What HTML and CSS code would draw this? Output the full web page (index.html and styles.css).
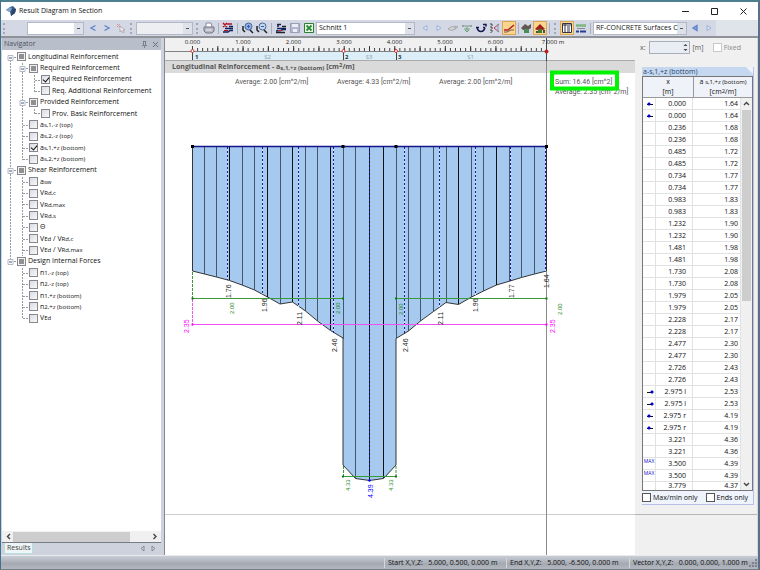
FILE: index.html
```html
<!DOCTYPE html>
<html lang="en">
<head>
<meta charset="utf-8">
<title>Result Diagram in Section</title>
<link rel="stylesheet" href="styles.css">
</head>
<body>
<div class="window">
  <header class="titlebar">
    <svg class="app-icon" width="10" height="10" viewBox="0 0 10 10"><path d="M0 4 4 1 7 0 10 3 9 7 5 10 4 6z" fill="#3c5f8c"/><path d="M0 4 4 1 6 3 4 6z" fill="#7fa3c8"/><path d="M6 3 10 3 9 7 5 10z" fill="#29466e"/></svg>
    <h1>Result Diagram in Section</h1>
    <button class="win-btn" aria-label="Minimize"><svg width="9" height="9"><path d="M1 4.500h7" stroke="#222"/></svg></button>
    <button class="win-btn" aria-label="Maximize"><svg width="9" height="9"><path d="M1.500 1.500h6v6h-6z" fill="none" stroke="#222"/></svg></button>
    <button class="win-btn" aria-label="Close"><svg width="9" height="9"><path d="M1.500 1.500l6 6m0-6l-6 6" stroke="#222"/></svg></button>
  </header>

  <div class="toolbar" role="toolbar">
    <span class="grip first"></span>
    <select class="combo" aria-label="Section"><option></option></select>
    <button class="tool" aria-label="Previous section"><svg viewBox="0 0 14 14"><path d="M9.500 4.500 5 7l4.500 2.500" class="nav-on"/></svg></button>
    <button class="tool" aria-label="Next section"><svg viewBox="0 0 14 14"><path d="M4.500 4.500 9 7 4.500 9.500" class="nav-on"/></svg></button>
    <button class="tool" aria-label="Pick section"><svg viewBox="0 0 14 14"><path d="M3 3l3 3M3 6l3-3" stroke="#c99" /><path d="M6 5v6l1.500-1.500L9 12l1-.5L9 9h2z" fill="#eee" stroke="#a89a9a" stroke-width=".7"/></svg></button>
    <span class="grip"></span>
    <select class="combo off" aria-label="Load case" disabled><option></option></select>
    <span class="grip"></span>
    <button class="tool" aria-label="Print"><svg viewBox="0 0 14 14"><path d="M4 6V2h5l1 4" fill="#fff" stroke="#889"/><path d="M2 6h10v4l-2 2H4L2 10z" fill="#b4b8c4" stroke="#778"/><path d="M4 9h6" stroke="#eee"/></svg></button>
    <span class="sep"></span>
    <button class="tool" aria-label="Diagram settings"><svg viewBox="0 0 14 14"><path d="M2 2l4 4m0-4L2 6M6 3h5" stroke="#b41020" stroke-width="1.500"/><path d="M4 7.500h8M8 5.500h4M2 11h5l2-1.500h3" stroke="#12205e" stroke-width="1.500" fill="none"/><path d="M3 9.500h4" stroke="#b41020"/></svg></button>
    <span class="sep wide"></span>
    <button class="tool" aria-label="Zoom in"><svg viewBox="0 0 14 14"><circle cx="7.500" cy="5.500" r="3.500" fill="#8fb0e4" stroke="#4a6797"/><path d="M6 5.500h3M7.500 4v3" stroke="#3558a0"/><path d="M9 9l3 3M2 5v4l2 2" stroke="#222" stroke-width="1.500" fill="none"/></svg></button>
    <button class="tool" aria-label="Zoom out"><svg viewBox="0 0 14 14"><circle cx="7.500" cy="5.500" r="3.500" fill="#c3d6f2" stroke="#4a6797"/><path d="M6 5.500h3" stroke="#3558a0"/><path d="M9 9l3 3M2 5v4l2 2" stroke="#222" stroke-width="1.500" fill="none"/></svg></button>
    <span class="sep"></span>
    <button class="tool" aria-label="Show values"><svg viewBox="0 0 14 14"><path d="M3 3.500h4M8 5.500h4M2 11.500h9" stroke="#223" stroke-width="1.500"/><path d="M3 7.500h9M2 10l5-.5L9 8.500h3M4 3v3" stroke="#12205e" stroke-width="1.500" fill="none"/><path d="M4 9.500h4" stroke="#b33"/></svg></button>
    <button class="tool" aria-label="Save"><svg viewBox="0 0 14 14"><path d="M2.500 2.500h9v9h-9z" fill="#b3b8d0" stroke="#9a9fb8"/><path d="M4 3h6v3H4zM5 8h4v3H5z" fill="#eceef4"/></svg></button>
    <button class="tool" aria-label="Export to Excel"><svg viewBox="0 0 14 14"><path d="M2.500 2.500h9v9h-9z" fill="#eaf6e6" stroke="#2f7d32"/><path d="M4.500 4.500l5 5m0-5l-5 5" stroke="#2d8a34" stroke-width="1.800"/></svg></button>
    <select class="combo section" aria-label="Section name"><option>Schnitt 1</option></select>
    <button class="tool" aria-label="Previous"><svg viewBox="0 0 14 14"><path d="M9 4.500 5 7l4 2.500z" class="nav-off"/></svg></button>
    <button class="tool" aria-label="Next"><svg viewBox="0 0 14 14"><path d="M5 4.500 9 7 5 9.500z" class="nav-off"/></svg></button>
    <button class="tool" aria-label="Hide"><svg viewBox="0 0 14 14"><path d="M2 8q4-4 8-1-4 4-8 1zM8 5l4 1-4 3" fill="#d4d6da" stroke="#aaa"/></svg></button>
    <button class="tool" aria-label="Mean line"><svg viewBox="0 0 14 14"><path d="M2 5h10M3 4v2M11 4v2" stroke="#789a80"/><path d="M7 6v5M5 9l2 2 2-2M4 8h6" stroke="#6fa67c" fill="none"/></svg></button>
    <button class="tool" aria-label="Flip diagram"><svg viewBox="0 0 14 14"><path d="M2 6.500h3M9 6.500h2M3 6.500q1 4 4 4t4-4M9 3.500h3v2" stroke="#151a50" stroke-width="1.500" fill="none"/></svg></button>
    <button class="tool" aria-label="Extremes"><svg viewBox="0 0 14 14"><path d="M3 2v10M3 4h3M3 7h3M3 10h3" stroke="#444" stroke-dasharray="2 1"/><path d="M6 7l5-4M6 7l5 4" stroke="#c33a5a"/><path d="M10 3v8" stroke="#79a"/></svg></button>
    <button class="tool active" aria-label="Smooth result"><svg viewBox="0 0 14 14"><path d="M2 9h4l6-5" stroke="#b8202a" stroke-width="1.500" fill="none"/><path d="M2 11h3l4-2h3" stroke="#6a5a60" fill="none"/></svg></button>
    <span class="sep narrow"></span>
    <button class="tool" aria-label="Result values"><svg viewBox="0 0 14 14"><path d="M2 7l4-4 3 2 3-2v4l-3 2H4z" fill="#655"/><path d="M5 8h5v4H5z" fill="#4a8d5a"/></svg></button>
    <button class="tool active" aria-label="Result colors"><svg viewBox="0 0 14 14"><path d="M2 8l5-5 5 5-2 1H4z" fill="#a02020"/><path d="M5 8h4v4H5z" fill="#4d7a28"/><path d="M3 10h2v2H3zM10 9h2v3h-2z" fill="#356"/></svg></button>
    <span class="sep"></span>
    <span class="grip"></span>
    <button class="tool active" aria-label="Table panel"><svg viewBox="0 0 14 14"><path d="M2.500 2.500h9v9h-9z" fill="#fff" stroke="#334"/><path d="M2.500 4h9M5 3v8M7 6h3M7 8h3M7 10h3" stroke="#334"/></svg></button>
    <button class="tool" aria-label="Color panel"><svg viewBox="0 0 14 14"><path d="M2 4.500h10" stroke="#7db77f" stroke-width="2.500"/><path d="M3 7.500h8" stroke="#888"/><path d="M2 10.500h3m1 0h6" stroke="#2a3f93" stroke-width="2"/></svg></button>
    <span class="sep"></span>
    <select class="combo module" aria-label="Module"><option>RF-CONCRETE Surfaces C</option></select>
    <button class="tool" aria-label="Previous case"><svg viewBox="0 0 14 14"><path d="M9 4.500 5 7l4 2.500z" class="nav-on fill"/></svg></button>
    <button class="tool" aria-label="Next case"><svg viewBox="0 0 14 14"><path d="M5 4.500 9 7 5 9.500z" class="nav-off"/></svg></button>
  </div>

  <main class="work">
    <aside class="navigator">
      <div class="nav-head"><h2>Navigator</h2>
        <svg width="7" height="7" viewBox="0 0 7 7"><path d="M2 .5h3M2.500 0v4M4.500 0v4M1 4.500h5M3.500 5v2" stroke="#6b7180" stroke-width=".8"/></svg>
        <svg width="7" height="7" viewBox="0 0 7 7"><path d="M1 1l5 5m0-5L1 6" stroke="#6b7180"/></svg>
      </div>
      <div class="tree-wrap">
        <ul class="tree">
          <li class="l0"><label><input type="checkbox" class="part">Longitudinal Reinforcement</label></li>
          <li class="l1"><label><input type="checkbox" class="part">Required Reinforcement</label></li>
          <li class="l2"><label><input type="checkbox" checked>Required Reinforcement</label></li>
          <li class="l2"><label><input type="checkbox">Req. Additional Reinforcement</label></li>
          <li class="l1"><label><input type="checkbox" class="part">Provided Reinforcement</label></li>
          <li class="l2"><label><input type="checkbox">Prov. Basic Reinforcement</label></li>
          <li class="l1"><label><input type="checkbox">a<sub>s,1,-z (top)</sub></label></li>
          <li class="l1"><label><input type="checkbox">a<sub>s,2,-z (top)</sub></label></li>
          <li class="l1"><label><input type="checkbox" checked>a<sub>s,1,+z (bottom)</sub></label></li>
          <li class="l1"><label><input type="checkbox">a<sub>s,2,+z (bottom)</sub></label></li>
          <li class="l0"><label><input type="checkbox" class="part">Shear Reinforcement</label></li>
          <li class="l1"><label><input type="checkbox">a<sub>sw</sub></label></li>
          <li class="l1"><label><input type="checkbox">V<sub>Rd,c</sub></label></li>
          <li class="l1"><label><input type="checkbox">V<sub>Rd,max</sub></label></li>
          <li class="l1"><label><input type="checkbox">V<sub>Rd,s</sub></label></li>
          <li class="l1"><label><input type="checkbox">Θ</label></li>
          <li class="l1"><label><input type="checkbox">V<sub>Ed</sub> / V<sub>Rd,c</sub></label></li>
          <li class="l1"><label><input type="checkbox">V<sub>Ed</sub> / V<sub>Rd,max</sub></label></li>
          <li class="l0"><label><input type="checkbox" class="part">Design Internal Forces</label></li>
          <li class="l1"><label><input type="checkbox">n<sub>1,-z (top)</sub></label></li>
          <li class="l1"><label><input type="checkbox">n<sub>2,-z (top)</sub></label></li>
          <li class="l1"><label><input type="checkbox">n<sub>1,+z (bottom)</sub></label></li>
          <li class="l1"><label><input type="checkbox">n<sub>2,+z (bottom)</sub></label></li>
          <li class="l1"><label><input type="checkbox">V<sub>Ed</sub></label></li>
        </ul>
        <svg class="branches" width="45" height="273" viewBox="0 0 45 273">
          <g fill="none" stroke="#9a9a9a" stroke-dasharray="2 1">
            <path d="M8.500 6v205M20.500 12v97M20.500 126v79M20.500 217v50M32.500 24v17M32.500 63v-5"/>
            <path d="M9 6.500h5M9 119.500h5M9 210.500h5M21 17.500h5M21 51.500h5M33 29.500h5M33 40.500h5M33 62.500h5M21 74.500h5M21 85.500h5M21 97.500h5M21 108.500h5M21 131.500h5M21 142.500h5M21 153.500h5M21 165.500h5M21 176.500h5M21 188.500h5M21 199.500h5M21 222.500h5M21 233.500h5M21 245.500h5M21 256.500h5M21 267.500h5"/>
          </g>
          <g fill="#fff" stroke="#b5b9c4"><path d="M6 4.500h5v5H6zM6 117.500h5v5H6zM6 208.500h5v5H6zM18 15.500h5v5h-5zM18 49.500h5v5h-5z"/></g>
          <path d="M7 7h3M7 120h3M7 211h3M19 18h3M19 52h3" stroke="#3c5f9c"/>
        </svg>
      </div>
      <div class="hscroll"><svg width="9" height="9"><path d="M6 2 3.500 4.500 6 7" class="arrow"/></svg><span class="hthumb"></span><svg width="9" height="9"><path d="M3.500 2 6 4.500 3.500 7" class="arrow"/></svg></div>
      <div class="tabs"><button class="tab">Results</button>
        <svg width="7" height="7"><path d="M5 1 2 3.500 5 6z" class="tab-arrow"/></svg>
        <svg width="7" height="7"><path d="M2 1l3 2.500L2 6z" class="tab-arrow"/></svg>
      </div>
    </aside>

    <section class="chart">
      <svg class="ruler" viewBox="165 38 470 23">
        <rect x="192" y="51" width="354.500" height="9.500" fill="#dceef8"/>
        <path d="M165 51.500h381.500" stroke="#666" stroke-width=".8"/><path d="M165 60.500h470" stroke="#aaa"/>
        <path d="M192 49.500h355" stroke="#444" stroke-width="3" stroke-dasharray="1 4.057"/>
        <path d="M192 48.500h355" stroke="#333" stroke-width="5" stroke-dasharray="1 24.286"/>
        <path d="M192.500 46v14M343.500 51v9M396.500 51v9M546.500 38v23" stroke="#444"/>
        <g class="tick">
          <text x="192.500" y="44">0.000</text><text x="243" y="44">1.000</text><text x="293.500" y="44">2.000</text><text x="344" y="44">3.000</text><text x="394.500" y="44">4.000</text><text x="445" y="44">5.000</text><text x="495.500" y="44">6.000</text><text x="553" y="44">7.000 m</text>
        </g>
        <g class="node"><text x="195" y="58.500">1</text><text x="345" y="58.500">2</text><text x="398" y="58.500">3</text></g>
        <g class="surf"><text x="267.500" y="58.500">S2</text><text x="369" y="58.500">S3</text><text x="470.500" y="58.500">S1</text></g>
        <g fill="#fff" stroke="#d33"><circle cx="192.500" cy="51" r="1.500"/><circle cx="343.500" cy="51" r="1.500"/><circle cx="396" cy="51" r="1.500"/></g><circle cx="546.500" cy="51.500" r="2" fill="#b22"/>
      </svg>
      <h2 class="chart-title">Longitudinal Reinforcement - a<sub>s,1,+z (bottom)</sub> [cm<sup>2</sup>/m]</h2>
      <svg class="plot" viewBox="165 73 470 482">
        <path d="M165 514.500h470" stroke="#ccc"/>
        <path d="M546.500 61v494" stroke="#8c8c8c"/>
        <path fill="#a6c9ef" stroke="#222" stroke-width=".9" d="M192.500 146.500V271l12 3 12 3 13 3.500 12.500 4.500 12.500 5 13 7 12.500 7 12.500-2 13 9 12 10 13 9.500 12.500 7.500V465l12.500 13.500 14 2 14-2L396 465V338.500l12.500-7.500 12-10 13-9.500 12.500-9 12.500 2 13-7.500 12-6 13-6 13.500-4 11.500-3.500 13-3.500 12-3V146.500z"/>
        <path stroke="#39485a" stroke-width=".9" d="M204.500 147v127M216.500 147v130M242.500 147v138M254.500 147v143M280.500 147v157M305.500 147v164M317.500 147v174M343.500 147v192M355.500 147v331M396.500 147v191M408.500 147v184M420.500 147v174M433.500 147v164M446.500 147v155M471.500 147v150M483.500 147v144M509.500 147v134M521.500 147v130M534.500 147v127"/>
        <path stroke="#111" d="M229.500 147v133M267.500 147v150M292.500 147v155M330.500 147v183M369.500 147v333M383.500 147v331M458.500 147v157M496.500 147v138"/>
        <path stroke="#cfe0ff" d="M227.500 147v133M262.500 147v147M298.500 147v160M333.500 147v186M404.500 147v186M439.500 147v160M475.500 147v148M510.500 147v134M545.500 147v124"/>
        <path stroke="#1a1aa0" stroke-dasharray="2 2" d="M227.500 147v133M262.500 147v147M298.500 147v160M333.500 147v186M369.500 147v333M404.500 147v186M439.500 147v160M475.500 147v148M510.500 147v134M545.500 147v124"/>
        <path d="M192 146.500h355" stroke="#15158c" stroke-width="1.500"/>
        <path d="M191 145h3v3h-3zM341.500 145h3v3h-3zM394.500 145h3v3h-3zM545 145h3v3h-3z"/>
        <g fill="none" stroke="#f050f0"><path d="M192.500 324.500h354"/><path d="M192.500 299v26" stroke-dasharray="3 1"/></g>
        <path d="M191.500 323.500h2v2h-2zM545.500 323.500h2v2h-2z" fill="#f0f"/>
        <g fill="none" stroke="#3a9a3a"><path d="M192.500 298.500H343M396 298.500h150.500M343 476.500h53"/><path d="M192.500 272v26M343.500 466v10M396 466v10" stroke-dasharray="3 1"/></g>
        <path fill="#0a7a0a" d="M191.500 297.500h2v2h-2zM342 297.500h2v2h-2zM395 297.500h2v2h-2zM545.500 297.500h2v2h-2zM342 475.500h2v2h-2zM395 475.500h2v2h-2z"/>
        <circle cx="369.500" cy="480.500" r="1.200" fill="#00f"/>
        <g class="val">
          <text transform="translate(231 298) rotate(-90)">1.76</text><text transform="translate(266.500 312) rotate(-90)">1.96</text><text transform="translate(301.500 325) rotate(-90)">2.11</text><text transform="translate(336.500 352) rotate(-90)">2.46</text>
          <text transform="translate(407.500 352) rotate(-90)">2.46</text><text transform="translate(443 325) rotate(-90)">2.11</text><text transform="translate(478 312) rotate(-90)">1.96</text><text transform="translate(513.500 298) rotate(-90)">1.77</text><text transform="translate(549 288) rotate(-90)">1.64</text>
        </g>
        <g class="mean">
          <text transform="translate(234 314) rotate(-90)">2.00</text><text transform="translate(340 314) rotate(-90)">2.00</text><text transform="translate(403 315) rotate(-90)">2.00</text><text transform="translate(561.500 315) rotate(-90)">2.00</text>
          <text transform="translate(350 491) rotate(-90)">4.33</text><text transform="translate(393 491) rotate(-90)">4.33</text>
        </g>
        <g class="total"><text transform="translate(189 333) rotate(-90)">2.35</text><text transform="translate(555 333) rotate(-90)">2.35</text></g>
        <text class="peak" transform="translate(372.500 498) rotate(-90)">4.39</text>
        <g class="note"><text x="235" y="84">Average: 2.00 [cm^2/m]</text><text x="337" y="84">Average: 4.33 [cm^2/m]</text><text x="439" y="84">Average: 2.00 [cm^2/m]</text><text x="555" y="94">Average: 2.35 [cm^2/m]</text></g>
        <rect x="552" y="72.500" width="65" height="16" fill="#fff" stroke="#00f400" stroke-width="4"/>
        <text class="note" x="555" y="84">Sum: 16.46 [cm^2]</text>
      </svg>
    </section>

    <aside class="panel">
      <form class="locate">
        <label for="posx">x:</label>
        <span class="spin"><input id="posx" type="text"><svg width="7" height="11"><path d="M0 0h7v11H0z" fill="#e8ebf0"/><path d="M3.500 2 5.500 4h-4zM3.500 9l2-2h-4z" fill="#445"/></svg></span>
        <span>[m]</span>
        <label class="fixed"><input type="checkbox" disabled>Fixed</label>
      </form>
      <div class="card">
        <h2 class="card-title">a-s,1,+z (bottom)</h2>
        <div class="grid-wrap">
          <table>
            <colgroup><col class="c-mark"><col class="c-x"><col class="c-val"><col class="c-bar"></colgroup>
            <thead><tr><th colspan="2">x<br>[m]</th><th colspan="2">a <sub>s,1,+z (bottom)</sub><br>[cm<sup>2</sup>/m]</th></tr></thead>
            <tbody>
              <tr><td class="left"></td><td>0.000</td><td>1.64</td><td class="bar" rowspan="33"><svg class="vscroll" viewBox="0 0 11 392"><path d="M0 0h11v392H0z" fill="#f0f0f0"/><path d="M1 12h9v191H1z" fill="#cdcdcd"/><path d="M3 7l2.500-2.500L8 7M3 385l2.500 2.500L8 385" class="arrow"/></svg></td></tr>
              <tr><td class="left"></td><td>0.000</td><td>1.64</td></tr>
              <tr><td></td><td>0.236</td><td>1.68</td></tr>
              <tr><td></td><td>0.236</td><td>1.68</td></tr>
              <tr><td></td><td>0.485</td><td>1.72</td></tr>
              <tr><td></td><td>0.485</td><td>1.72</td></tr>
              <tr><td></td><td>0.734</td><td>1.77</td></tr>
              <tr><td></td><td>0.734</td><td>1.77</td></tr>
              <tr><td></td><td>0.983</td><td>1.83</td></tr>
              <tr><td></td><td>0.983</td><td>1.83</td></tr>
              <tr><td></td><td>1.232</td><td>1.90</td></tr>
              <tr><td></td><td>1.232</td><td>1.90</td></tr>
              <tr><td></td><td>1.481</td><td>1.98</td></tr>
              <tr><td></td><td>1.481</td><td>1.98</td></tr>
              <tr><td></td><td>1.730</td><td>2.08</td></tr>
              <tr><td></td><td>1.730</td><td>2.08</td></tr>
              <tr><td></td><td>1.979</td><td>2.05</td></tr>
              <tr><td></td><td>1.979</td><td>2.05</td></tr>
              <tr><td></td><td>2.228</td><td>2.17</td></tr>
              <tr><td></td><td>2.228</td><td>2.17</td></tr>
              <tr><td></td><td>2.477</td><td>2.30</td></tr>
              <tr><td></td><td>2.477</td><td>2.30</td></tr>
              <tr><td></td><td>2.726</td><td>2.43</td></tr>
              <tr><td></td><td>2.726</td><td>2.43</td></tr>
              <tr><td class="right"></td><td>2.975 l</td><td>2.53</td></tr>
              <tr><td class="right"></td><td>2.975 l</td><td>2.53</td></tr>
              <tr><td class="left"></td><td>2.975 r</td><td>4.19</td></tr>
              <tr><td class="left"></td><td>2.975 r</td><td>4.19</td></tr>
              <tr><td></td><td>3.221</td><td>4.36</td></tr>
              <tr><td></td><td>3.221</td><td>4.36</td></tr>
              <tr><td class="max">MAX</td><td>3.500</td><td>4.39</td></tr>
              <tr><td class="max">MAX</td><td>3.500</td><td>4.39</td></tr>
              <tr class="last"><td></td><td>3.779</td><td>4.37</td></tr>
            </tbody>
          </table>
        </div>
        <div class="filters"><label><input type="checkbox">Max/min only</label><label><input type="checkbox">Ends only</label></div>
      </div>
      <div class="panel-rest"></div>
    </aside>
  </main>

  <footer class="status">
    <span class="start">Start X,Y,Z:&nbsp;&nbsp; 5.000, 0.500, 0.000 m</span>
    <span class="end">End X,Y,Z:&nbsp;&nbsp; 5.000, -6.500, 0.000 m</span>
    <span class="vector">Vector X,Y,Z:&nbsp;&nbsp; 0.000, 0.000, 1.000 m</span>
    <svg width="10" height="11" viewBox="0 0 10 11"><path d="M7 2h2v2H7zM4 5h2v2H4zM7 5h2v2H7zM1 8h2v2H1zM4 8h2v2H4zM7 8h2v2H7z" fill="#7d838d"/></svg>
  </footer>
</div>
</body>
</html>
```
FILE: styles.css
```css
* { box-sizing: border-box; }

body {
  margin: 0;
  font: 7px/10px "Open Sans", "Liberation Sans", sans-serif;
  color: #111;
}

h1, h2, ul { margin: 0; padding: 0; font: inherit; }
button, input, select { font: inherit; color: inherit; margin: 0; padding: 0; }
button { border: 0; background: none; }
svg { display: block; flex: none; }
label { white-space: nowrap; }
sub, sup { font-size: 6px; line-height: 1px; }
sub { vertical-align: -1px; }
sup { vertical-align: 2px; }

.window {
  height: 100vh;
  display: flex;
  flex-direction: column;
  border-style: solid;
  border-width: 2px 2px 1px 1px;
  border-color: #4d7f90 #5b6f8a #777d86 #41718c;
  background: #f0f0f0;
}

/* Title bar */
.titlebar { flex: none; height: 18px; display: flex; align-items: center; background: #fff; }
.app-icon { margin: 0 3px 0 5px; }
.titlebar h1 { flex: 1; color: #111; }
.win-btn { width: 29px; height: 18px; display: flex; align-items: center; justify-content: center; }

/* Toolbar */
.toolbar {
  flex: none;
  height: 18px;
  display: flex;
  align-items: center;
  background: linear-gradient(90deg, #d3d8e4 715px, #dfe3ea 715px);
  border-bottom: 2px solid #8f9299;
}
.grip { width: 5px; height: 11px; margin: 0 1px 0 2px; border-left: 2px dotted #a3a8b6; flex: none; }
.grip.first { margin-right: 19px; }
.sep { width: 5px; height: 11px; flex: none; background: linear-gradient(90deg, transparent 2px, #a9aebb 2px 3px, transparent 3px); }
.sep.wide { width: 6px; }
.sep.narrow { width: 3px; }
.tool { width: 14px; height: 14px; flex: none; }
.tool svg { width: 14px; height: 14px; fill: none; }
.tool.active { background: #fbd58c; box-shadow: inset 0 0 0 1px #d9a757; }
.nav-on { fill: none; stroke: #5c82cc; stroke-width: 1.3; }
.nav-on.fill { fill: #8ba9e0; }
.nav-off { fill: #dbe6f6; stroke: #9db2d8; }
.combo {
  appearance: none;
  width: 57px;
  height: 13px;
  flex: none;
  padding: 0 2px;
  border: 1px solid #b4b8c4;
  border-radius: 0;
  background-color: #fff;
  background-image: linear-gradient(#555, #555), linear-gradient(90deg, transparent calc(100% - 9px), #dde1ea 0);
  background-size: 3px 1px, 100% 100%;
  background-position: right 3px center, 0 0;
  background-repeat: no-repeat;
  margin-right: 2px;
}
.combo.off { background-color: #eceef2; margin-right: 1px; opacity: 1; }
.combo.section { width: 99px; margin-right: 3px; }
.combo.module { width: 94px; margin-right: 1px; }

/* Work area */
.work { flex: 1; min-height: 0; display: flex; }

/* Navigator */
.navigator {
  flex: none;
  width: 164px;
  display: flex;
  flex-direction: column;
  background: #cdd2dc;
  border-right: 1px solid #85888f;
  padding: 0 3px 0 1px;
}
.nav-head { height: 12px; display: flex; align-items: center; gap: 4px; background: #b9bfca; padding: 0 2px; color: #4d525c; }
.nav-head h2 { flex: 1; }
.tree-wrap { flex: 1; min-height: 0; position: relative; background: #fff; padding-top: 1px; }
.tree { list-style: none; height: 273px; display: grid; grid-template-rows: repeat(24, 1fr); }
.tree li { display: flex; align-items: center; min-height: 0; }
.tree label, .filters label, .fixed { display: flex; align-items: baseline; white-space: pre; }
.l0 { padding-left: 15px; }
.l1 { padding-left: 27px; }
.l2 { padding-left: 39px; }
.branches { position: absolute; left: 0; top: 1px; }

input[type="checkbox"] {
  appearance: none;
  width: 9px;
  height: 9px;
  margin-right: 2px;
  flex: none;
  align-self: center;
  border: 1px solid #85888e;
  background: linear-gradient(135deg, #d9dce2, #f8f8f8);
}
input.part[type="checkbox"] { background: linear-gradient(#909090, #909090) center / 5px 5px no-repeat, #f3f3f3; }
.tree input:checked { position: relative; }
.tree input:checked::after {
  content: "";
  position: absolute;
  left: 2px;
  top: 0;
  width: 3px;
  height: 5px;
  border: solid #111;
  border-width: 0 1px 1px 0;
  transform: rotate(40deg);
}

.hscroll { height: 11px; display: flex; align-items: center; background: #f0f0f0; padding: 0 2px; }
.hthumb { width: 117px; height: 10px; background: #cdcdcd; margin-right: auto; }
.arrow { fill: none; stroke: #444; stroke-width: 1.4; }
.tabs { height: 13px; display: flex; gap: 4px; align-items: center; border-top: 1px solid #777b84; padding: 0 4px 1px 2px; }
.tab { height: 11px; padding: 0 2px; margin-right: auto; background: #edf5f6; border: 1px solid #b8dede; border-top: 0; color: #444; }
.tab-arrow { fill: none; stroke: #868b98; }

/* Chart */
.chart { flex: 1; min-width: 0; display: flex; flex-direction: column; background: #fff; }
.ruler { width: 100%; background: #f0f0f0; }
.chart-title { flex: none; height: 12px; padding-left: 7px; line-height: 12px; font-weight: 700; color: #555; background: #dadada; white-space: pre; }
.plot { width: 100%; overflow: visible; }
.tick { font-size: 6px; fill: #222; text-anchor: middle; }
.node { font-size: 6px; font-weight: 700; fill: #234; }
.surf { font-size: 6px; fill: #8a9ba8; text-anchor: middle; }
.val, .peak, .mean, .total { font-family: "Liberation Sans", sans-serif; }
.val { font-size: 7px; fill: #222; }
.mean { font-size: 6px; fill: #1f8a1f; }
.total { font-size: 7px; fill: #f0f; }
.peak { font-size: 7px; fill: #00f; }
.note { font-family: Roboto, sans-serif; font-size: 7px; fill: #555; }

/* Result panel */
.panel { flex: none; width: 123px; display: flex; flex-direction: column; background: #f0f0f0; border-right: 1px solid #d6d8dc; }
.locate { height: 23px; display: flex; align-items: center; gap: 3px; padding: 0 0 4px 5px; color: #555; }
.spin { display: flex; width: 41px; height: 13px; border: 1px solid #a9afba; background: #e9eef5; }
.spin input { flex: 1; min-width: 0; border: 0; background: none; }
.fixed { margin-left: auto; margin-right: 16px; color: #8b8b8b; }
.fixed input[type="checkbox"] { border-color: #c8c8c8; background: #fff; }
.card { margin: 6px 3px 0 7px; background: #eef3fc; border-right: 1px solid #b9bfe8; border-bottom: 1px solid #b9bfe8; }
.card-title { height: 9px; line-height: 9px; padding-left: 1px; background: #c6d8f0; color: #27476f; clip-path: polygon(0 0, calc(100% - 7px) 0, 100% 7px, 100% 100%, 0 100%); }
.grid-wrap { height: 415px; overflow: hidden; border: 1px solid #777; background: #fff; }
table { width: 100%; table-layout: fixed; border-collapse: separate; border-spacing: 0; }
.c-mark { width: 13px; }
.c-x { width: 37px; }
.c-bar { width: 11px; }
th { height: 21px; padding: 0; font-weight: 400; line-height: 10px; background: #eff2f8; border-bottom: 1px solid #999; white-space: nowrap; }
th sub { vertical-align: baseline; }
th sup { vertical-align: 1px; }
th + th { border-left: 1px solid #999; }
td { height: 12px; padding: 0 2px 0 0; line-height: 11px; text-align: right; border-right: 1px solid #e2e2e2; border-bottom: 1px solid #e2e2e2; white-space: nowrap; }
td:nth-child(2) { padding-right: 6px; }
.last td { height: 8px; line-height: 8px; border-bottom: 0; }
td.bar { padding: 0; border: 0; vertical-align: top; }
.vscroll { width: 100%; }
td.max { padding: 0; font-size: 5px; line-height: 6px; color: #11c; text-align: center; vertical-align: top; }
td.left, td.right { background: linear-gradient(#111, #111) 4px 6px / 6px 1px no-repeat; }
td.left { background: radial-gradient(circle at 6px 6px, #00c 1px, transparent 2px), linear-gradient(#111, #111) 4px 6px / 6px 1px no-repeat; }
td.right { background: radial-gradient(circle at 9px 6px, #00c 1px, transparent 2px), linear-gradient(#111, #111) 4px 6px / 6px 1px no-repeat; }
.filters { display: flex; height: 13px; align-items: center; gap: 8px; }
.filters input[type="checkbox"] { background: #fff; border-color: #555; }
.panel-rest { margin-top: 9px; flex: 1; border-top: 1px solid #b5b5b5; }

/* Status bar */
.status {
  flex: none;
  height: 14px;
  display: flex;
  align-items: center;
  justify-content: flex-end;
  border-top: 1px solid #e8eaee;
  background: linear-gradient(#c9cdd6, #a4a9b2 60%, #b3b8c0);
}
.status span { padding-left: 3px; border-left: 1px solid #d3d6dc; white-space: nowrap; }
.start { width: 122px; }
.end { width: 123px; }
.vector { width: 119px; }
```
